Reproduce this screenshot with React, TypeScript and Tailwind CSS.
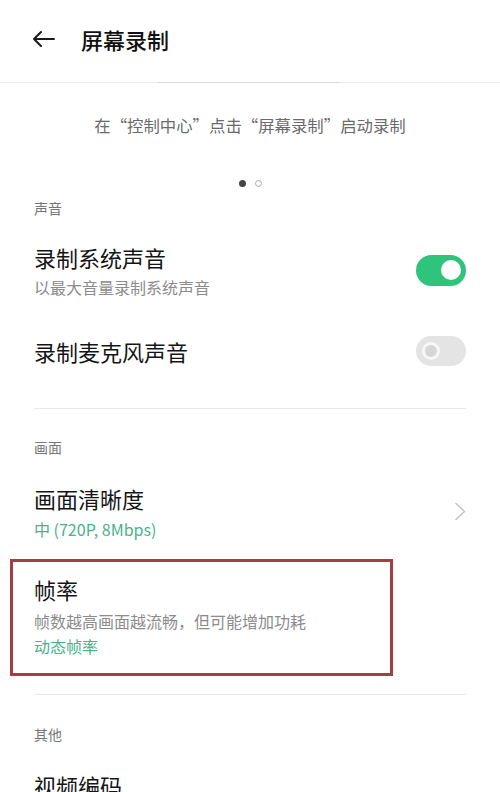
import React from "react";

const font = { fontFamily: '"Noto Sans CJK SC", "Noto Sans", sans-serif' };

function Toggle({ on }: { on: boolean }) {
  return on ? (
    <div className="w-[50px] h-[31px] rounded-full bg-[#2ec47c] flex items-center justify-end pr-[5px] shrink-0">
      <div className="w-[20px] h-[20px] rounded-full bg-white" />
    </div>
  ) : (
    <div className="w-[50px] h-[30px] rounded-full bg-[#e4e4e4] flex items-center pl-[6px] shrink-0">
      <div className="w-[18px] h-[18px] rounded-full border-[3px] border-[#f7f7f7] bg-[#d6d6d6]" />
    </div>
  );
}

export default function App() {
  return (
    <div className="w-[500px] h-[792px] bg-white overflow-hidden" style={font}>
      {/* header */}
      <div className="h-[82px] flex items-center pl-[32px] pb-[4px]">
        <svg width="23" height="18" viewBox="0 0 23 18" fill="none" stroke="#1a1a1a" strokeWidth="2" strokeLinecap="round" strokeLinejoin="round">
          <path d="M22 9H2M9 2L2 9l7 7" />
        </svg>
        <div className="ml-[26px] text-[22px] leading-[30px] font-medium text-[#111]">屏幕录制</div>
      </div>
      <div className="h-px bg-[#ececec] flex">
        <div className="w-[158px]" />
        <div className="w-[182px] bg-[#d9d9d9]" />
      </div>

      <div className="mt-[30px] text-center text-[16.4px] leading-[24px] text-[#6a6a6a]">在“控制中心”点击“屏幕录制”启动录制</div>

      <div className="mt-[43px] flex justify-center gap-[9px] h-[7px]">
        <div className="w-[7px] h-[7px] rounded-full bg-[#444]" />
        <div className="w-[7px] h-[7px] rounded-full border border-[#aaa]" />
      </div>

      <div className="px-[34px]">
        <div className="mt-[11px] text-[14px] leading-[20px] text-[#777]">声音</div>

        <div className="mt-[24px] flex items-center justify-between">
          <div>
            <div className="text-[22px] leading-[30px] text-[#151515]">录制系统声音</div>
            <div className="mt-[4px] text-[16px] leading-[22px] text-[#8c8c8c]">以最大音量录制系统声音</div>
          </div>
          <Toggle on />
        </div>

        <div className="mt-[38px] flex items-center justify-between">
          <div className="text-[22px] leading-[30px] text-[#151515]">录制麦克风声音</div>
          <Toggle on={false} />
        </div>

        <div className="mt-[42px] h-px bg-[#e8e8e8]" />

        <div className="mt-[28px] text-[14px] leading-[20px] text-[#777]">画面</div>

        <div className="mt-[26px] flex items-center justify-between">
          <div>
            <div className="text-[22px] leading-[30px] text-[#151515]">画面清晰度</div>
            <div className="mt-[5px] text-[16px] leading-[22px] text-[#47b38c]">中 (720P, 8Mbps)</div>
          </div>
          <svg width="12" height="19" viewBox="0 0 12 19" fill="none" stroke="#c4c4c4" strokeWidth="1.5" strokeLinecap="round" strokeLinejoin="round">
            <path d="M2 1.5l8.5 8-8.5 8" />
          </svg>
        </div>

        <div className="relative mt-[34px]">
          <div className="absolute left-[-24px] top-[-15px] w-[383px] h-[117px] border-[3px] border-[#a83c44]" />
          <div className="text-[22px] leading-[30px] text-[#151515]">帧率</div>
          <div className="mt-[6px] text-[16px] leading-[22px] text-[#8c8c8c]">帧数越高画面越流畅，但可能增加功耗</div>
          <div className="mt-[3px] text-[16px] leading-[22px] text-[#47b38c]">动态帧率</div>
        </div>

        <div className="mt-[37px] h-px bg-[#e8e8e8]" />

        <div className="mt-[29px] text-[14px] leading-[20px] text-[#777]">其他</div>

        <div className="mt-[26px] text-[22px] leading-[30px] text-[#151515]">视频编码</div>
      </div>
    </div>
  );
}
